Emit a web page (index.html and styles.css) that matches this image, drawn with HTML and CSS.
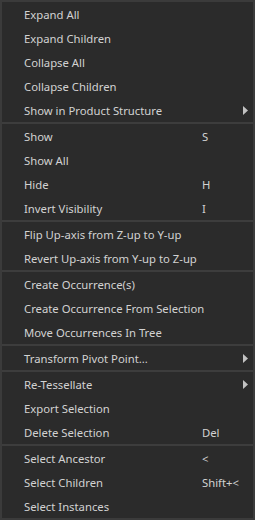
FILE: index.html
```html
<html>
  <head>
    <link rel="stylesheet" href="styles.css">
  </head>
  <body>
    <div class="menu">
      <div class="item"><span class="label">Expand All</span></div>
      <div class="item"><span class="label">Expand Children</span></div>
      <div class="item"><span class="label">Collapse All</span></div>
      <div class="item"><span class="label">Collapse Children</span></div>
      <div class="item"><span class="label">Show in Product Structure</span><span class="key"></span><span class="sub"><svg width="5" height="9" viewBox="0 0 5 9"><polygon points="0,0 5,4.5 0,9"/></svg></span></div>
      <div class="sep"></div>
      <div class="item"><span class="label">Show</span><span class="key">S</span></div>
      <div class="item"><span class="label">Show All</span></div>
      <div class="item"><span class="label">Hide</span><span class="key">H</span></div>
      <div class="item"><span class="label">Invert Visibility</span><span class="key">I</span></div>
      <div class="sep"></div>
      <div class="item"><span class="label">Flip Up-axis from Z-up to Y-up</span></div>
      <div class="item"><span class="label">Revert Up-axis from Y-up to Z-up</span></div>
      <div class="sep"></div>
      <div class="item"><span class="label">Create Occurrence(s)</span></div>
      <div class="item"><span class="label">Create Occurrence From Selection</span></div>
      <div class="item"><span class="label">Move Occurrences In Tree</span></div>
      <div class="sep"></div>
      <div class="item"><span class="label">Transform Pivot Point...</span><span class="key"></span><span class="sub"><svg width="5" height="9" viewBox="0 0 5 9"><polygon points="0,0 5,4.5 0,9"/></svg></span></div>
      <div class="sep"></div>
      <div class="item"><span class="label">Re-Tessellate</span><span class="key"></span><span class="sub"><svg width="5" height="9" viewBox="0 0 5 9"><polygon points="0,0 5,4.5 0,9"/></svg></span></div>
      <div class="item"><span class="label">Export Selection</span></div>
      <div class="item"><span class="label">Delete Selection</span><span class="key">Del</span></div>
      <div class="sep"></div>
      <div class="item"><span class="label">Select Ancestor</span><span class="key">&lt;</span></div>
      <div class="item"><span class="label">Select Children</span><span class="key">Shift+&lt;</span></div>
      <div class="item"><span class="label">Select Instances</span></div>
    </div>
  </body>
</html>
```

FILE: styles.css
```css
*{
  margin: 0px;
  padding: 0px;
  box-sizing: border-box;
}
body{
  background: #2b2b2b;
  font-family: "Noto Sans", "Open Sans", sans-serif;
  font-size: 11.3px;
  color: #d2d2d2;
}
.menu{
  width: 255px;
  height: 520px;
  background: #2b2b2b;
  border: 2px solid #3b3b3b;
  display: flex;
  flex-direction: column;
}
.item{
  height: 24px;
  display: grid;
  grid-template-columns: 1fr 37px 14px;
  align-items: center;
  padding-left: 22px;
  padding-top: 1px;
  white-space: nowrap;
}
.key{
  text-align: left;
}
.sub{
  display: flex;
  align-items: center;
  justify-content: flex-start;
  padding-left: 4px;
  padding-bottom: 1px;
}
.sub svg{
  fill: #c2c2c2;
}
.sep{
  height: 2px;
  background: #3d3d3d;
}
```
